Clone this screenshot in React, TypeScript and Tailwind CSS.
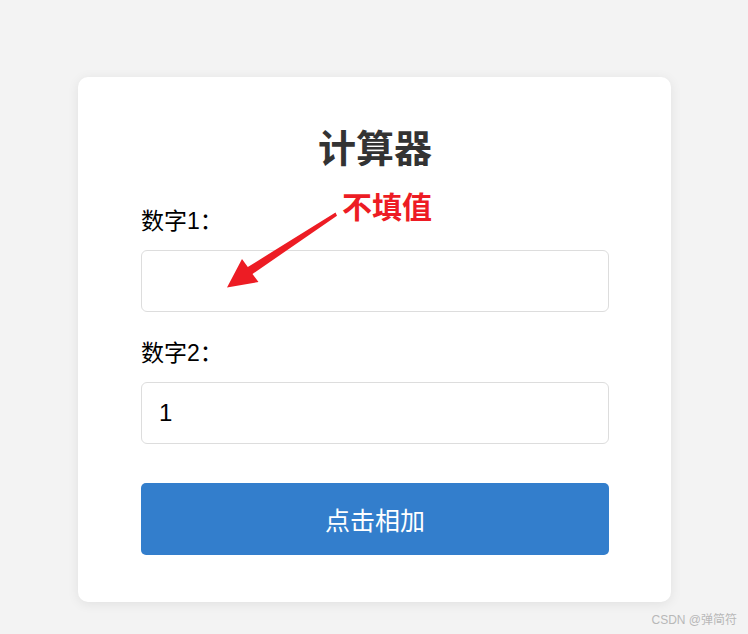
import React from "react";

export default function App() {
  const font = { fontFamily: '"Liberation Sans", Arial, "Noto Sans CJK SC", sans-serif' };
  return (
    <div
      className="relative w-full h-[634px] bg-[#f3f3f3] pt-[77px] overflow-hidden"
      style={font}
    >
      <div className="relative ml-[78px] w-[593px] bg-white rounded-[10px] shadow-[0_2px_12px_rgba(0,0,0,0.08)] pt-[51px] pl-[63px] pr-[62px] pb-[47px] flex flex-col">
        <h2 className="h-[43px] leading-[43px] text-[38px] font-bold text-center text-[#333]">
          计算器
        </h2>
        <label className="mt-[35px] leading-[30px] text-[23px] text-black">数字1：</label>
        <input
          className="mt-[14px] h-[62px] w-full rounded-[6px] border border-[#dddddd] px-[17px] text-[24px] text-black outline-none"
          defaultValue=""
        />
        <label className="mt-[26px] leading-[30px] text-[23px] text-black">数字2：</label>
        <input
          className="mt-[14px] h-[62px] w-full rounded-[6px] border border-[#dddddd] px-[17px] text-[24px] text-black outline-none"
          defaultValue="1"
        />
        <button className="mt-[39px] h-[72px] w-full rounded-[5px] bg-[#337ecc] pt-[5px] text-white text-[25px]">
          点击相加
        </button>

        <svg
          className="absolute left-0 top-0 pointer-events-none"
          width="593"
          height="525"
          viewBox="0 0 593 525"
        >
          <polygon
            points="257.5,135.5 259,138.8 174.5,197 180.5,205 149,210.5 164,182 169.8,190"
            fill="#ed1c24"
          />
        </svg>
        <div className="absolute left-[264px] top-[113px] text-[30px] leading-[36px] font-bold text-[#ed1c24]">
          不填值
        </div>
      </div>
      <div className="absolute right-[11px] bottom-[7px] text-[12px] leading-[14px] text-[#b8b8b8]">
        CSDN @弹简符
      </div>
    </div>
  );
}
